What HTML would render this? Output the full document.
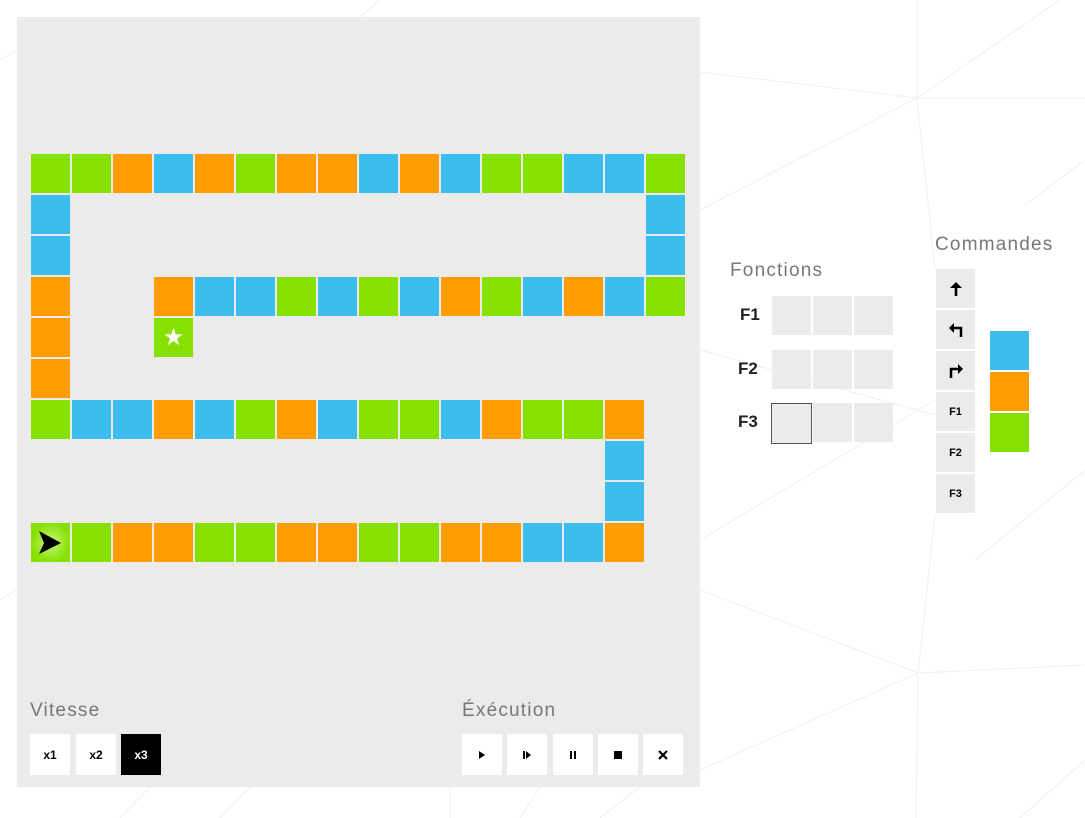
<!DOCTYPE html>
<html><head><meta charset="utf-8"><style>
body{margin:0;width:1085px;height:818px;background:#fff;position:relative;overflow:hidden;font-family:"Liberation Sans",sans-serif}
.a{position:absolute}
#panel{left:17px;top:17px;width:683px;height:770px;background:#ebebeb}
.c{position:absolute;width:39px;height:39px}
.G{background:#86e000}.O{background:#ff9c00}.B{background:#3dbdee}
.lbl{position:absolute;font-size:19px;color:#777;letter-spacing:1.2px;font-weight:normal}
.slot{position:absolute;width:39px;height:39px;background:#ebebeb}
.btn{position:absolute;width:40px;height:41px;background:#fff;display:flex;align-items:center;justify-content:center;font-size:12px;font-weight:bold;color:#000}
.cmd{position:absolute;width:39px;height:39px;background:#ebebeb;display:flex;align-items:center;justify-content:center;font-size:11px;font-weight:bold}
.fl{position:absolute;font-size:17px;font-weight:bold;color:#222}
</style></head><body>
<svg class="a" style="left:0;top:0" width="1085" height="818" stroke="#efefef" stroke-width="1" fill="none">
<line x1="917" y1="0" x2="917" y2="98"/><line x1="700" y1="72" x2="917" y2="98"/><line x1="917" y1="98" x2="1085" y2="98"/>
<line x1="917" y1="98" x2="1060" y2="0"/><line x1="917" y1="98" x2="700" y2="210"/><line x1="917" y1="98" x2="935" y2="269"/>
<line x1="935" y1="515" x2="918" y2="673"/><line x1="918" y1="673" x2="1085" y2="665"/><line x1="918" y1="673" x2="700" y2="590"/>
<line x1="918" y1="673" x2="700" y2="770"/><line x1="918" y1="673" x2="916" y2="818"/><line x1="1085" y1="470" x2="975" y2="560"/>
<line x1="700" y1="540" x2="935" y2="400"/><line x1="1085" y1="760" x2="1020" y2="818"/><line x1="1085" y1="160" x2="1025" y2="205"/>
<line x1="700" y1="350" x2="935" y2="415"/>
<line x1="0" y1="60" x2="17" y2="50"/><line x1="0" y1="600" x2="17" y2="590"/>
<line x1="150" y1="787" x2="120" y2="818"/><line x1="250" y1="787" x2="220" y2="818"/><line x1="450" y1="787" x2="450" y2="818"/><line x1="540" y1="787" x2="520" y2="818"/><line x1="640" y1="787" x2="600" y2="818"/>
<line x1="360" y1="17" x2="380" y2="0"/>
</svg>
<div id="panel" class="a"></div>
<div id="grid"></div>
<div class="lbl" style="left:30px;top:700px">Vitesse</div>
<div class="lbl" style="left:462px;top:700px">Éxécution</div>
<div class="btn" style="left:30px;top:734px">x1</div>
<div class="btn" style="left:76px;top:734px">x2</div>
<div class="btn" style="left:121px;top:734px;background:#000;color:#fff">x3</div>
<div class="btn" style="left:462px;top:734px"><svg width="10" height="10"><path d="M2 1L8 5L2 9Z" fill="#000"/></svg></div>
<div class="btn" style="left:507px;top:734px"><svg width="10" height="10"><rect x="1" y="1" width="2" height="8"/><path d="M4 1L9 5L4 9Z"/></svg></div>
<div class="btn" style="left:553px;top:734px"><svg width="10" height="10"><rect x="2" y="1" width="2" height="8"/><rect x="6" y="1" width="2" height="8"/></svg></div>
<div class="btn" style="left:598px;top:734px"><svg width="10" height="10"><rect x="1" y="1" width="8" height="8"/></svg></div>
<div class="btn" style="left:643px;top:734px"><svg width="10" height="10"><path d="M1 1L9 9M9 1L1 9" stroke="#000" stroke-width="2.2"/></svg></div>
<div class="lbl" style="left:730px;top:260px">Fonctions</div>
<div class="fl" style="left:740px;top:305px">F1</div>
<div class="fl" style="left:738px;top:359px">F2</div>
<div class="fl" style="left:738px;top:412px">F3</div>
<div class="slot" style="left:772px;top:296px"></div><div class="slot" style="left:813px;top:296px"></div><div class="slot" style="left:854px;top:296px"></div>
<div class="slot" style="left:772px;top:350px"></div><div class="slot" style="left:813px;top:350px"></div><div class="slot" style="left:854px;top:350px"></div>
<div class="slot" style="left:771px;top:403px;border:1px solid #555;width:39px;height:39px"></div><div class="slot" style="left:813px;top:403px"></div><div class="slot" style="left:854px;top:403px"></div>
<div class="lbl" style="left:935px;top:234px">Commandes</div>
<div class="cmd" style="left:936px;top:269px"><svg width="14" height="16"><path d="M7 15V5" stroke="#000" stroke-width="2.6"/><path d="M1 7L7 1L13 7Z" fill="#000"/></svg></div>
<div class="cmd" style="left:936px;top:310px"><svg width="16" height="16"><path d="M13 15V6H4" stroke="#000" stroke-width="2.5" fill="none"/><path d="M1 6l5-5v10z" fill="#000"/></svg></div>
<div class="cmd" style="left:936px;top:351px"><svg width="16" height="16"><path d="M3 15V6H12" stroke="#000" stroke-width="2.5" fill="none"/><path d="M15 6l-5-5v10z" fill="#000"/></svg></div>
<div class="cmd" style="left:936px;top:392px">F1</div>
<div class="cmd" style="left:936px;top:433px">F2</div>
<div class="cmd" style="left:936px;top:474px">F3</div>
<div class="c B" style="left:990px;top:331px"></div>
<div class="c O" style="left:990px;top:372px"></div>
<div class="c G" style="left:990px;top:413px"></div>
<script>
var rows={0:"GGOBOGOOBOBGGBBG",1:{0:"B",15:"B"},2:{0:"B",15:"B"},3:{0:"O",3:"O",4:"B",5:"B",6:"G",7:"B",8:"G",9:"B",10:"O",11:"G",12:"B",13:"O",14:"B",15:"G"},4:{0:"O",3:"G"},5:{0:"O"},6:"GBBOBGOBGGBOGGO",7:{14:"B"},8:{14:"B"},9:"GGOOGGOOGGOOBBO"};
var h="";
for(var r in rows){var d=rows[r];for(var k in d){var x=31+41*k,y=154+41*r;h+='<div class="c '+d[k]+'" style="left:'+x+'px;top:'+y+'px"></div>';}}
document.getElementById("grid").innerHTML=h;
</script>
<div class="a" style="left:154px;top:318px;width:39px;height:39px;color:#fff;font-size:24px;text-align:center;line-height:39px">★</div>
<svg class="a" style="left:31px;top:523px" width="39" height="39"><defs><radialGradient id="g"><stop offset="0" stop-color="#c8f780"/><stop offset="1" stop-color="#86e000"/></radialGradient></defs><rect width="39" height="39" fill="url(#g)"/><path d="M8 8L30 20L8 31L13 20Z" fill="#000"/></svg>
</body></html>
